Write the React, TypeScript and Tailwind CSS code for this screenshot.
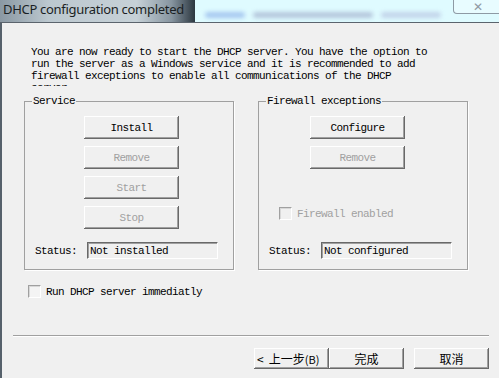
import React from "react";

const mono = "font-['Liberation_Mono',monospace] text-[11px] tracking-[-0.6px] leading-[12px]";
const raised =
  "bg-[#f0f0f0] shadow-[inset_-1px_-1px_#696969,inset_1px_1px_#ffffff,inset_-2px_-2px_#a0a0a0]";

function Btn({ label, disabled, className = "" }: { label: string; disabled?: boolean; className?: string }) {
  return (
    <div
      className={`flex items-center justify-center ${raised} ${mono} ${disabled ? "text-[#a0a0a0]" : "text-black"} ${className}`}
    >
      {label}
    </div>
  );
}

function CnBtn({ children, className = "" }: { children: React.ReactNode; className?: string }) {
  return (
    <div
      className={`flex h-[21px] w-[75px] items-center justify-center whitespace-nowrap ${raised} font-['Noto_Sans_CJK_SC',sans-serif] text-[12px] leading-none text-black ${className}`}
    >
      {children}
    </div>
  );
}

function Check({ disabled }: { disabled?: boolean }) {
  return (
    <div
      className={`h-[13px] w-[13px] border border-t-[#a0a0a0] border-l-[#a0a0a0] border-b-white border-r-white ${
        disabled ? "bg-[#f0f0f0]" : "bg-[#f4f4f4]"
      } shadow-[inset_1px_1px_#d8d8d8]`}
    />
  );
}

function StatusBox({ text }: { text: string }) {
  return (
    <div
      className={`flex h-[17px] w-[131px] items-center border border-t-[#696969] border-l-[#696969] border-b-white border-r-white bg-[#f0f0f0] pl-[2px] shadow-[inset_1px_1px_#a0a0a0] ${mono} text-black`}
    >
      {text}
    </div>
  );
}

function Group({ title, children }: { title: string; children: React.ReactNode }) {
  return (
    <fieldset className="h-[175px] w-[210px] border border-[#a0a0a0] shadow-[1px_1px_0_#ffffff]">
      <legend className={`ml-[7px] bg-[#f0f0f0] px-px ${mono} text-black`}>{title}</legend>
      {children}
    </fieldset>
  );
}

export default function App() {
  return (
    <div className="flex h-[378px] w-[499px] flex-col overflow-hidden bg-[#f0f0f0]">
      {/* title bar */}
      <div className="flex h-[23px] shrink-0 border-b border-[#5b646d]">
        <div className="flex w-[195px] items-start overflow-hidden bg-[linear-gradient(to_right,#8a98a3,#bcc8cf_25%,#c6d1d7_70%,#8795a0_88%,#2c3740)] pl-[3px] pt-[1px]">
          <span className="whitespace-nowrap font-['Noto_Sans',sans-serif] text-[13px] leading-[16px] tracking-[-0.3px] text-[#1a1f24]">
            DHCP configuration completed
          </span>
        </div>
        <div className="relative flex flex-1 bg-[#dffbff]">
          <div className="mt-[12px] flex gap-[8px] pl-[10px] blur-[2px]">
            <span className="h-[6px] w-[40px] rounded bg-[#a6c8f0]" />
            <span className="h-[6px] w-[120px] rounded bg-[#b4c6dc]" />
            <span className="h-[6px] w-[60px] rounded bg-[#c2d4ea]" />
          </div>
          <div className="ml-auto mr-[-4px] flex h-[14px] w-[50px] items-center justify-center rounded-b-[4px] border border-t-0 border-[#8e9aa4] bg-[#e8fcff] font-['DejaVu_Sans',sans-serif] text-[12px] font-bold leading-none text-[#8f9aa2]">
            ✕
          </div>
        </div>
      </div>

      {/* body */}
      <div className="flex flex-1 flex-col border-l-2 border-[#56616b]">
        <div className={`ml-[29px] mt-[23px] h-[40px] w-[400px] overflow-hidden ${mono} text-black`}>
          You are now ready to start the DHCP server. You have the option to run the server as a Windows service and it is recommended to add firewall exceptions to enable all communications of the DHCP server.
        </div>

        <div className="ml-[22px] mt-[9px] flex gap-[24px]">
          <Group title="Service">
            <div className="ml-[59px] mt-[9px] flex flex-col gap-[7px]">
              <Btn label="Install" className="h-[23px] w-[95px]" />
              <Btn label="Remove" disabled className="h-[23px] w-[95px]" />
              <Btn label="Start" disabled className="h-[23px] w-[95px]" />
              <Btn label="Stop" disabled className="h-[23px] w-[95px]" />
            </div>
            <div className="ml-[10px] mt-[13px] flex items-center">
              <span className={`w-[52px] ${mono} text-black`}>Status:</span>
              <StatusBox text="Not installed" />
            </div>
          </Group>
          <Group title="Firewall exceptions">
            <div className="ml-[51px] mt-[9px] flex flex-col gap-[7px]">
              <Btn label="Configure" className="h-[23px] w-[95px]" />
              <Btn label="Remove" disabled className="h-[23px] w-[95px]" />
            </div>
            <div className="ml-[20px] mt-[38px] flex items-center gap-[5px]">
              <Check disabled />
              <span className={`${mono} text-[#a0a0a0]`}>Firewall enabled</span>
            </div>
            <div className="ml-[10px] mt-[22px] flex items-center">
              <span className={`w-[52px] ${mono} text-black`}>Status:</span>
              <StatusBox text="Not configured" />
            </div>
          </Group>
        </div>

        <div className="ml-[26px] mt-[15px] flex items-center gap-[5px]">
          <Check />
          <span className={`${mono} text-black`}>Run DHCP server immediatly</span>
        </div>

        <div className="ml-[11px] mt-[37px] h-[2px] w-[476px] border-t border-[#a0a0a0] bg-white" />

        <div className="ml-[252px] mt-[11px] flex">
          <CnBtn className="justify-start gap-[5px] pl-[3px]">
            <span>&lt;</span>
            <span>上一步<span className="text-[11px]">(B)</span></span>
          </CnBtn>
          <CnBtn>完成</CnBtn>
          <CnBtn className="ml-[10px]">取消</CnBtn>
        </div>
      </div>
    </div>
  );
}
